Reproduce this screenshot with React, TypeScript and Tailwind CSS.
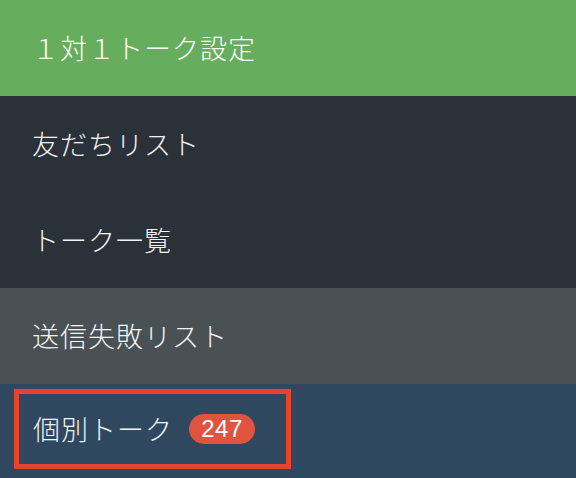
const font = { fontFamily: '"Noto Sans CJK JP", "Noto Sans", sans-serif' }

const rows = [
  { label: '友だちリスト', bg: 'bg-[#2a3139]' },
  { label: 'トーク一覧', bg: 'bg-[#2a3139]' },
  { label: '送信失敗リスト', bg: 'bg-[#4a5154]' },
]

export default function App() {
  return (
    <div
      className="flex h-[478px] w-[576px] flex-col overflow-hidden text-[27px] font-light tracking-[1px] text-white"
      style={font}
    >
      <div className="flex h-[96px] shrink-0 items-center bg-[#67ad5e] px-[32px]">
        １対１トーク設定
      </div>
      {rows.map((row) => (
        <div
          key={row.label}
          className={`flex h-[96px] shrink-0 items-center px-[32px] text-[#f2f3f4] ${row.bg}`}
        >
          {row.label}
        </div>
      ))}
      <div className="flex-1 bg-[#2f4860] pl-[14px] pt-[5px]">
        <div className="flex h-[80px] w-[277px] items-center border-[5px] border-[#e8432c] pl-[14px] text-[#f2f3f4]">
          <span>個別トーク</span>
          <span
            className="ml-[16px] flex h-[30px] w-[66px] items-center justify-center rounded-full bg-[#e0533f] text-[24px] font-normal tracking-[0.5px] text-white"
            style={{ fontFamily: '"Liberation Sans", Arial, sans-serif' }}
          >
            247
          </span>
        </div>
      </div>
    </div>
  )
}
